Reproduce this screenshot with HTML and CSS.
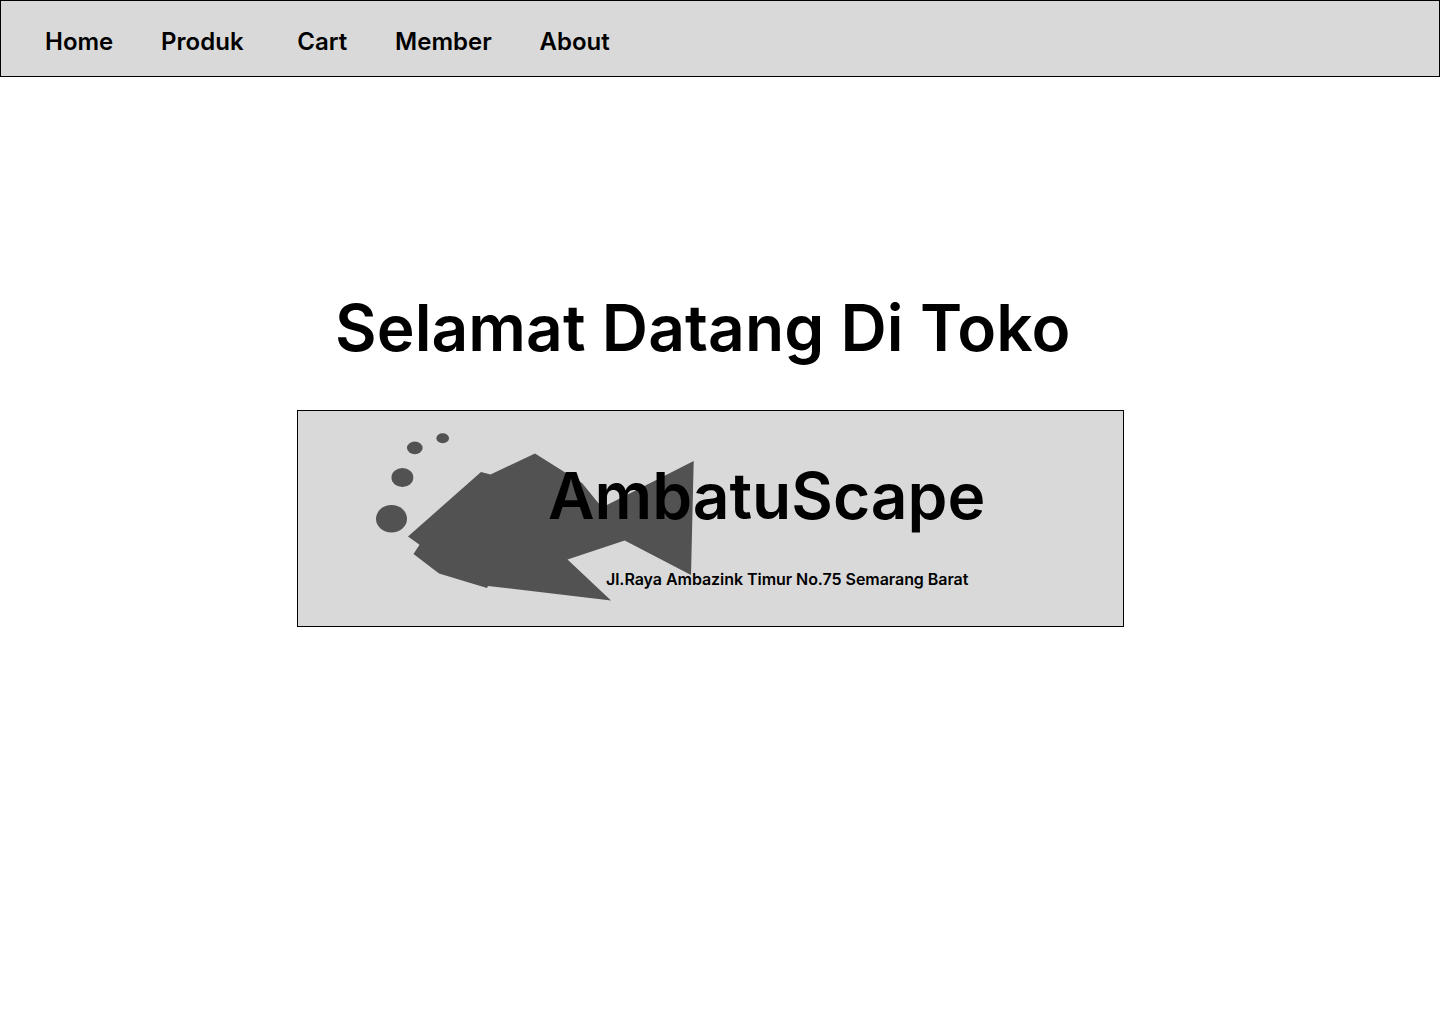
FILE: index.html
```html
<!DOCTYPE html>
<html lang="id">
<head>
<meta charset="utf-8">
<title>AmbatuScape</title>
<link rel="stylesheet" href="styles.css">
</head>
<body>
<nav class="navbar">
  <a class="nav-link" href="#">Home</a>
  <a class="nav-link nav-produk" href="#">Produk</a>
  <a class="nav-link" href="#">Cart</a>
  <a class="nav-link" href="#">Member</a>
  <a class="nav-link" href="#">About</a>
</nav>
<main class="hero">
  <h1 class="welcome">Selamat Datang Di Toko</h1>
  <section class="banner">
    <svg class="fish" width="320" height="170" viewBox="375 432 320 170" aria-hidden="true">
      <ellipse cx="391.5" cy="518.7" rx="15.5" ry="13.8"/>
      <ellipse cx="402.4" cy="477.5" rx="10.9" ry="9.6"/>
      <ellipse cx="414.8" cy="447.9" rx="7.8" ry="6.3"/>
      <ellipse cx="442.7" cy="438.2" rx="6.3" ry="5"/>
      <path d="M408 536.5L481 472L490.5 474.5L535 453.5L566 473L582 483L602 507.5L693.7 461L691 575L624.7 540.5L567.5 559.5L611 600.5L488 586L487 588L439 573.5L413.5 554L419.5 544.7Z"/>
    </svg>
    <div class="store">
      <h2 class="store-name">AmbatuScape</h2>
      <p class="address">Jl.Raya Ambazink Timur No.75 Semarang Barat</p>
    </div>
  </section>
</main>
</body>
</html>
```
FILE: styles.css
```css
* { box-sizing: border-box; margin: 0; }
body {
  background: #fff;
  color: #000;
  font-family: Inter, sans-serif;
  font-weight: 600;
}
.navbar {
  display: flex;
  gap: 47.8px;
  height: 77px;
  padding: 26px 44px 0;
  background: #d9d9d9;
  border: 1px solid #000;
}
.nav-link {
  color: inherit;
  font-size: 24px;
  line-height: 29px;
  text-decoration: none;
}
.nav-produk { margin-right: 6px; }
.hero { padding: 212px 0 0 297px; }
.welcome {
  padding-left: 38px;
  font-size: 64px;
  font-weight: 600;
  line-height: 77px;
  letter-spacing: 0.1px;
}
.banner {
  position: relative;
  width: 827px;
  height: 217px;
  margin-top: 44px;
  padding: 46px 0 0 250px;
  background: #d9d9d9;
  border: 1px solid #000;
}
.fish {
  position: absolute;
  left: 77px;
  top: 21px;
  fill: #000;
  opacity: 0.62;
}
.store { position: relative; }
.store-name {
  font-size: 64px;
  font-weight: 600;
  line-height: 77px;
}
.address {
  margin-top: 36px;
  padding-left: 58px;
  font-size: 16px;
  line-height: 19px;
  letter-spacing: -0.05px;
}
```
